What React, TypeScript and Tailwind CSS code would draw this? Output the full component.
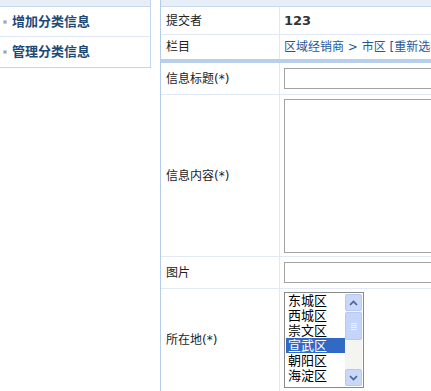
const FONT = '"DejaVu Sans", "Noto Sans CJK SC", sans-serif';

const AREAS = ['东城区', '西城区', '崇文区', '宣武区', '朝阳区', '海淀区'];

function Label({ children }: { children: React.ReactNode }) {
  return (
    <div className="w-[119px] shrink-0 flex items-center pl-[5px] border-r border-[#e1e9f4] text-[12px] text-[#222]">
      {children}
    </div>
  );
}

function ScrollBar() {
  return (
    <div className="w-[17px] shrink-0 flex flex-col bg-[#f4f4f0]">
      <div className="h-[17px] rounded-[2px] border border-[#b7c9f0] bg-[#c8d7fa] flex items-center justify-center">
        <svg width="9" height="6" viewBox="0 0 9 6">
          <path d="M1 5 L4.5 1.5 L8 5" fill="none" stroke="#4d6185" strokeWidth="1.6" />
        </svg>
      </div>
      <div className="mt-[1px] h-[28px] rounded-[2px] border border-[#b7c9f0] bg-[#c5d5fa] flex flex-col items-center justify-center gap-[1px]">
        <div className="w-[6px] h-px bg-[#eef3ff]" />
        <div className="w-[6px] h-px bg-[#eef3ff]" />
        <div className="w-[6px] h-px bg-[#eef3ff]" />
        <div className="w-[6px] h-px bg-[#eef3ff]" />
      </div>
      <div className="flex-1" />
      <div className="h-[17px] rounded-[2px] border border-[#b7c9f0] bg-[#c8d7fa] flex items-center justify-center">
        <svg width="9" height="6" viewBox="0 0 9 6">
          <path d="M1 1 L4.5 4.5 L8 1" fill="none" stroke="#4d6185" strokeWidth="1.6" />
        </svg>
      </div>
    </div>
  );
}

export default function App() {
  return (
    <div className="w-[431px] h-[391px] overflow-hidden bg-white flex" style={{ fontFamily: FONT }}>
      {/* 左侧菜单 */}
      <div className="w-[151px] shrink-0 self-start border-r border-b border-[#c3d5ec]">
        <div className="h-[7px] bg-[#e6eef8] border-b border-[#c9daee]" />
        {['增加分类信息', '管理分类信息'].map((t, i) => (
          <div
            key={t}
            className={`h-[30px] flex items-center gap-[5px] pl-[3px] ${i === 0 ? 'border-b border-[#e0e8f3]' : ''}`}
          >
            <div className="w-[4px] h-[4px] bg-[#8fa5bd] border border-[#c5d2e0]" />
            <span className="text-[13px] font-bold text-[#1c4977]">{t}</span>
          </div>
        ))}
      </div>

      <div className="w-[9px] shrink-0" />

      {/* 右侧表单 */}
      <div className="w-[400px] shrink-0 border-l border-[#b5cce9] flex flex-col">
        <div className="h-[7px] bg-[#e6eef8] border-b border-[#c9daee]" />

        <div className="h-[28px] flex border-b border-[#e1e9f4]">
          <Label>提交者</Label>
          <div className="flex items-center pl-[4px] text-[13px] font-bold text-[#333]">123</div>
        </div>

        <div className="h-[24px] flex">
          <Label>栏目</Label>
          <div className="flex items-center pl-[4px] text-[12px] text-[#1f5a99] whitespace-nowrap">
            区域经销商 &gt; 市区 [重新选择]
          </div>
        </div>

        <div className="h-[4px] bg-[#b9d0ec]" />

        <div className="h-[32px] flex border-b border-[#e1e9f4]">
          <Label>信息标题(*)</Label>
          <div className="flex items-center pl-[4px]">
            <div className="w-[200px] h-[21px] border border-[#a3a3a3]" />
          </div>
        </div>

        <div className="h-[162px] flex border-b border-[#e1e9f4]">
          <Label>信息内容(*)</Label>
          <div className="flex items-center pl-[4px]">
            <div className="w-[200px] h-[154px] border border-[#a3a3a3]" />
          </div>
        </div>

        <div className="h-[32px] flex border-b border-[#e1e9f4]">
          <Label>图片</Label>
          <div className="flex items-center pl-[4px]">
            <div className="w-[200px] h-[21px] border border-[#a3a3a3]" />
          </div>
        </div>

        <div className="flex-1 flex">
          <Label>所在地(*)</Label>
          <div className="pl-[4px] pt-[3px]">
            <div className="w-[80px] h-[96px] border border-[#8a8a8a] p-px flex">
              <div className="flex-1 overflow-hidden">
                <div className="-mt-[1px]">
                  {AREAS.map((a) => (
                    <div
                      key={a}
                      className={`h-[15px] leading-[15px] pl-[2px] text-[13px] ${
                        a === '宣武区' ? 'bg-[#316ac5] text-white' : 'text-black'
                      }`}
                    >
                      {a}
                    </div>
                  ))}
                </div>
              </div>
              <ScrollBar />
            </div>
          </div>
        </div>
      </div>
    </div>
  );
}
